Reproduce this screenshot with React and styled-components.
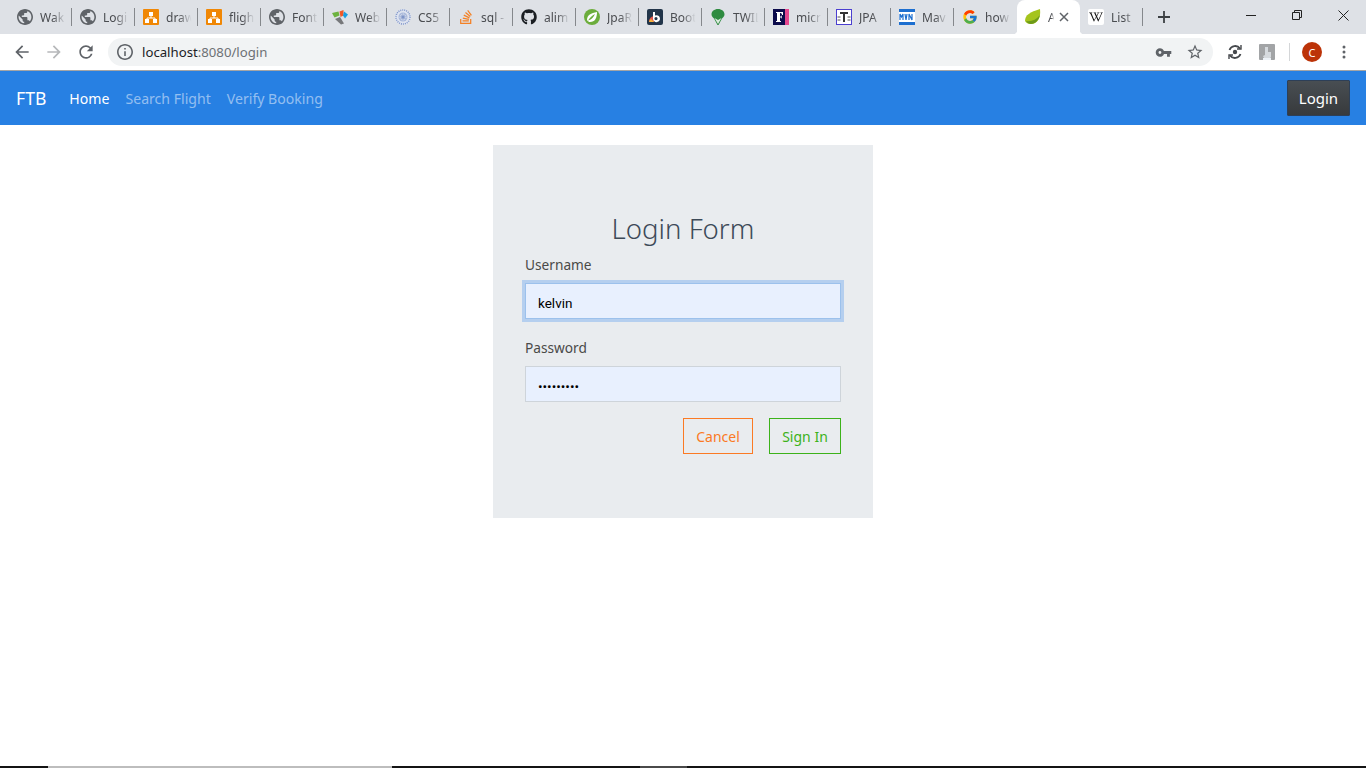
import React from 'react';
import styled, { createGlobalStyle, css } from 'styled-components';
import { FaGithub, FaStackOverflow, FaWikipediaW } from 'react-icons/fa';
import { FcGoogle } from 'react-icons/fc';

const GlobalStyle = createGlobalStyle`
  html, body {
    margin: 0;
    padding: 0;
    background: #fff;
    font-family: "Noto Sans", "Open Sans", "Liberation Sans", sans-serif;
  }
  * { box-sizing: border-box; }
`;

const Page = styled.div`
  min-height: 100vh;
  display: flex;
  flex-direction: column;
`;

// browser chrome
const TabStrip = styled.div`
  height: 34px;
  background: #dee1e6;
  display: flex;
  padding-left: 9px;
`;

const activeTab = css`
  background: #fff;
  border-radius: 8px 8px 0 0;

  &::before,
  &::after {
    content: '';
    position: absolute;
    bottom: 0;
    width: 4px;
    height: 4px;
  }
  &::before {
    left: -4px;
    background: radial-gradient(circle at 0 0, transparent 4px, #fff 4.5px);
  }
  &::after {
    right: -4px;
    background: radial-gradient(circle at 100% 0, transparent 4px, #fff 4.5px);
  }
`;

const separatorTab = css`
  &::after {
    content: '';
    position: absolute;
    right: 0;
    top: 8px;
    width: 1px;
    height: 18px;
    background: #85888c;
  }
`;

const Tab = styled.div`
  position: relative;
  width: 63px;
  height: 34px;
  flex: none;
  display: flex;
  align-items: center;
  padding-left: 8px;
  gap: 7px;
  ${(p) => p.$active && activeTab}
  ${(p) => p.$sep && separatorTab}
`;

const TabIcon = styled.span`
  width: 16px;
  height: 16px;
  flex: none;
  display: flex;
  align-items: center;
  justify-content: center;

  svg {
    flex: none;
  }
`;

const WikiTile = styled.span`
  width: 16px;
  height: 16px;
  border-radius: 2px;
  background: #fff;
  display: flex;
  align-items: center;
  justify-content: center;
`;

const TabTitle = styled.span`
  flex: 1;
  min-width: 0;
  overflow: hidden;
  white-space: nowrap;
  font-size: 12px;
  color: #4a4c50;
  -webkit-mask-image: linear-gradient(90deg, #000 40%, transparent 80%);
  mask-image: linear-gradient(90deg, #000 40%, transparent 80%);
`;

const TabClose = styled.span`
  width: 16px;
  height: 16px;
  margin: 0 8px 0 -7px;
  flex: none;
  display: flex;
  align-items: center;
  justify-content: center;
`;

const NewTab = styled.div`
  width: 30px;
  height: 34px;
  margin-left: 6px;
  display: flex;
  align-items: center;
  justify-content: center;
`;

const WindowControls = styled.div`
  margin-left: auto;
  display: flex;
`;

const WindowButton = styled.div`
  width: 46px;
  height: 30px;
  display: flex;
  align-items: center;
  justify-content: center;
`;

const Toolbar = styled.div`
  height: 37px;
  background: #fff;
  border-bottom: 1px solid #a5a5a5;
  display: flex;
  align-items: center;
  padding: 0 6px;
`;

const ToolButton = styled.div`
  width: 32px;
  height: 32px;
  flex: none;
  display: flex;
  align-items: center;
  justify-content: center;
`;

const Omnibox = styled.div`
  flex: 1;
  height: 28px;
  margin: 0 6px;
  padding: 0 2px 0 9px;
  border-radius: 14px;
  background: #f1f3f4;
  display: flex;
  align-items: center;
  gap: 9px;
`;

const Url = styled.div`
  flex: 1;
  font-size: 13.2px;
  color: #202124;

  span {
    color: #6d7175;
  }
`;

const OmniActions = styled.div`
  display: flex;
`;

const ToolDivider = styled.div`
  width: 13px;
  height: 18px;
  flex: none;
  padding-left: 6px;

  &::before {
    content: '';
    display: block;
    width: 1px;
    height: 100%;
    background: #d4d6d8;
  }
`;

const Avatar = styled.div`
  width: 20px;
  height: 20px;
  border-radius: 50%;
  background: #bc3308;
  color: #fff;
  font-size: 11px;
  display: flex;
  align-items: center;
  justify-content: center;
`;

// site navbar
const Navbar = styled.nav`
  height: 54px;
  background: #2780e3;
  display: flex;
  align-items: center;
  padding: 0 16px;
`;

const Brand = styled.div`
  font-size: 17.6px;
  color: #fff;
  margin-right: 23px;
`;

const NavLinks = styled.div`
  display: flex;
  gap: 16px;
`;

const NavLink = styled.a`
  font-size: 14.1px;
  color: ${(p) => (p.$active ? '#fff' : 'rgba(255, 255, 255, 0.5)')};
`;

const LoginButton = styled.button`
  margin-left: auto;
  width: 63px;
  height: 36px;
  padding: 0;
  font-family: inherit;
  font-size: 15px;
  color: #fff;
  background: linear-gradient(#484e53, #373a3c);
  border: 1px solid #2d3f57;
  border-radius: 1px;
`;

// login card
const Main = styled.main`
  flex: 1;
  display: flex;
  flex-direction: column;
  align-items: center;
  padding-top: 20px;
`;

const Card = styled.form`
  width: 380px;
  padding: 64px 32px;
  background: #e9ecef;
`;

const Title = styled.h1`
  margin: 0;
  height: 44px;
  font-size: 27.6px;
  line-height: 38px;
  font-weight: 300;
  text-align: center;
  color: #3d4a58;
`;

const Field = styled.div`
  margin-bottom: ${(p) => p.$gap}px;
`;

const Label = styled.label`
  display: block;
  height: 24px;
  margin-bottom: 6px;
  font-size: 13.7px;
  line-height: 24px;
  color: #4a4a48;
`;

const Input = styled.input`
  display: block;
  width: 100%;
  height: 36px;
  padding: 3px 12px 0;
  font-family: "Roboto", "Liberation Sans", sans-serif;
  font-size: 13.5px;
  color: #000;
  background: #e8f0fe;
  border: 1px solid ${(p) => (p.$focused ? '#9cc1ec' : '#ced4da')};
  box-shadow: ${(p) => (p.$focused ? '0 0 0 3px #b5cfef' : 'none')};
  outline: none;
  border-radius: 0;
`;

const Actions = styled.div`
  display: flex;
  justify-content: flex-end;
  gap: 16px;
`;

const OutlineButton = styled.button`
  width: ${(p) => p.$width}px;
  height: 36px;
  padding: 0;
  font-family: inherit;
  font-size: 14px;
  color: ${(p) => p.$color};
  background: transparent;
  border: 1px solid ${(p) => p.$color};
  border-radius: 0;
`;

const BottomEdge = styled.div`
  height: 2px;
  display: flex;
  background: #141414;
`;

const EdgeSegment = styled.div`
  width: ${(p) => p.$width}px;
  background: ${(p) => p.$color};
`;

const Globe = () => (
  <svg width="16" height="16" viewBox="2 2 20 20" fill="#5f6368">
    <path d="M12 2C6.48 2 2 6.48 2 12s4.48 10 10 10 10-4.48 10-10S17.52 2 12 2zm-1 17.93c-3.95-.49-7-3.85-7-7.93 0-.62.08-1.21.21-1.79L9 15v1c0 1.1.9 2 2 2v1.93zm6.9-2.54c-.26-.81-1-1.39-1.9-1.39h-1v-3c0-.55-.45-1-1-1H8v-2h2c.55 0 1-.45 1-1V7h2c1.1 0 2-.9 2-2v-.41c2.93 1.19 5 4.06 5 7.41 0 2.08-.8 3.97-2.1 5.39z" />
  </svg>
);

const DrawIo = () => (
  <svg width="16" height="16" viewBox="0 0 16 16">
    <rect width="16" height="16" rx="1" fill="#f08705" />
    <path d="M8 6v3M8 9H4v2M8 9h4v2" stroke="#fff" strokeWidth="1" fill="none" />
    <rect x="6" y="3" width="4" height="4" fill="#fff" />
    <rect x="2" y="10" width="4" height="4" fill="#fff" />
    <rect x="10" y="10" width="4" height="4" fill="#fff" />
  </svg>
);

const Pinwheel = () => (
  <svg width="16" height="16" viewBox="0 0 16 16">
    <path d="M0 4l6.500-1.500 1 4-5 2z" fill="#6db33f" />
    <path d="M7.500 2.500l4-1.500 0 5.500-3 1.500z" fill="#f15a29" />
    <path d="M12 2.500l4 3-3 4-2-3z" fill="#1ba1e2" />
    <path d="M3 10l5-2 4 6.500-3 1z" fill="#77787b" />
  </svg>
);

const Seal = () => (
  <svg width="16" height="16" viewBox="0 0 16 16">
    <circle cx="8" cy="8" r="8" fill="#dfe4f0" />
    <circle cx="8" cy="8" r="7" fill="none" stroke="#7f95c8" strokeWidth="1.500" strokeDasharray="1 1" />
    <circle cx="8" cy="8" r="4.500" fill="#a9b8da" />
    <circle cx="8" cy="8" r="3" fill="none" stroke="#e6ebf5" strokeWidth="1" strokeDasharray="1 1" />
    <circle cx="8" cy="8" r="1.500" fill="#7f95c8" />
  </svg>
);

const Leaf = ({ round }) =>
  round ? (
    <svg width="16" height="16" viewBox="0 0 16 16">
      <circle cx="8" cy="8" r="8" fill="#6cad3c" />
      <path d="M3 11c0-5 4-7 10-8 0 6-2 10-7 10-1 0-2-.4-3-2z" fill="#fff" />
      <path d="M4 11.500c2-3 4-5 7-6.500-1.500 3-3 5.500-7 6.500z" fill="#6cad3c" />
    </svg>
  ) : (
    <svg width="18" height="16" viewBox="0 0 18 16">
      <path d="M1 12C1 6 6 3 16 0c1 8-2 15-9 15-3 0-5-1-6-3z" fill="#a5c41d" />
      <path d="M2 12c5 1 10-1 14-6-1 5-5 9-9 9-2 0-4-1-5-3z" fill="#6d9a1a" />
    </svg>
  );

const BootIcon = () => (
  <svg width="16" height="16" viewBox="0 0 16 16">
    <rect width="16" height="16" rx="2" fill="#22354a" />
    <path d="M2 13a6 6 0 0 1 5-6v6z" fill="#e2574c" />
    <path d="M2 13a4 4 0 0 1 2-3l3 3z" fill="#f3b33d" />
    <path d="M6 3h2v3.500a3.500 3.500 0 1 1-2 3.200zM9 8a1.600 1.600 0 1 0 0 3.200A1.600 1.600 0 0 0 9 8z" fill="#fff" fillRule="evenodd" />
  </svg>
);

const Balloon = () => (
  <svg width="16" height="16" viewBox="0 0 16 16">
    <path d="M8 0c3.800 0 6.500 2.300 6.500 5.200 0 1.800-1 3-2.500 4.300L8.500 16h-1L4 9.500C2.500 8.200 1.500 7 1.500 5.200 1.500 2.300 4.200 0 8 0z" fill="#2e8b40" />
    <path d="M4.500 9L8 15l3.500-6L8 11z" fill="#dbeadd" />
  </svg>
);

const FinTimes = () => (
  <svg width="16" height="16" viewBox="0 0 16 16">
    <rect width="16" height="16" fill="#0b0b4b" />
    <rect x="12" width="4" height="16" fill="#e5478f" />
    <path d="M3 3h7v3H9c0-1-.5-2-1.500-2H7v3.500h1.500V6.500H9v3h-.5V8.500H7V12h1v1H3v-1h1V4H3z" fill="#fff" />
  </svg>
);

const TypeBox = () => (
  <svg width="16" height="16" viewBox="0 0 16 16">
    <rect x="0.500" y="0.500" width="15" height="15" fill="#fff" stroke="#4b3fd0" />
    <path d="M4 3h8v2H9v8H7V5H4z" fill="#333" />
    <path d="M1.500 8h3M1.500 11h3M11.500 8h3M11.500 11h3" stroke="#555" strokeWidth="1" />
  </svg>
);

const Mvn = () => (
  <svg width="16" height="16" viewBox="0 0 16 16">
    <rect width="16" height="16" fill="#fff" />
    <rect width="16" height="3" fill="#1d6fd0" />
    <rect y="13" width="16" height="3" fill="#1d6fd0" />
    <path d="M1 11V5l1.500 3L4 5v6M6 5l1 6 1-6M10 11V5l3 6V5" stroke="#1d6fd0" strokeWidth="1.200" fill="none" />
  </svg>
);

const tabs = [
  { id: 1, title: 'Wak', icon: <Globe /> },
  { id: 2, title: 'Logi', icon: <Globe /> },
  { id: 3, title: 'draw', icon: <DrawIo /> },
  { id: 4, title: 'fligh', icon: <DrawIo /> },
  { id: 5, title: 'Font', icon: <Globe /> },
  { id: 6, title: 'Web', icon: <Pinwheel /> },
  { id: 7, title: 'CS5', icon: <Seal /> },
  { id: 8, title: 'sql -', icon: <FaStackOverflow size={16} color="#f48024" /> },
  { id: 9, title: 'alim', icon: <FaGithub size={16} color="#1b1f23" /> },
  { id: 10, title: 'JpaR', icon: <Leaf round /> },
  { id: 11, title: 'Boot', icon: <BootIcon /> },
  { id: 12, title: 'TWIL', icon: <Balloon /> },
  { id: 13, title: 'micr', icon: <FinTimes /> },
  { id: 14, title: 'JPA', icon: <TypeBox /> },
  { id: 15, title: 'Mav', icon: <Mvn /> },
  { id: 16, title: 'how', icon: <FcGoogle size={16} />, noSep: true },
  { id: 17, title: 'A', icon: <Leaf />, active: true },
  { id: 18, title: 'List', icon: <WikiTile><FaWikipediaW size={14} color="#111" /></WikiTile> },
];

const Chrome = () => (
  <>
    <TabStrip>
      {tabs.map((t) => (
        <Tab key={t.id} $active={t.active} $sep={!t.active && !t.noSep}>
          <TabIcon>{t.icon}</TabIcon>
          <TabTitle>{t.title}</TabTitle>
          {t.active && (
            <TabClose>
              <svg width="10" height="10" viewBox="0 0 10 10" stroke="#5f6368" strokeWidth="1.500">
                <path d="M1 1l8 8M9 1l-8 8" />
              </svg>
            </TabClose>
          )}
        </Tab>
      ))}
      <NewTab>
        <svg width="12" height="12" viewBox="0 0 12 12" stroke="#3c4043" strokeWidth="1.800">
          <path d="M6 0v12M0 6h12" />
        </svg>
      </NewTab>
      <WindowControls>
        <WindowButton>
          <svg width="10" height="10" viewBox="0 0 10 10" stroke="#222" fill="none">
            <path d="M0 5.500h10" />
          </svg>
        </WindowButton>
        <WindowButton>
          <svg width="10" height="10" viewBox="0 0 10 10" stroke="#222" fill="none">
            <path d="M0.500 2.500h7v7h-7zM2.500 2.500v-2h7v7h-2" />
          </svg>
        </WindowButton>
        <WindowButton>
          <svg width="11" height="11" viewBox="0 0 11 11" stroke="#222" fill="none">
            <path d="M0.500 0.500l10 10M10.500 0.500l-10 10" />
          </svg>
        </WindowButton>
      </WindowControls>
    </TabStrip>
    <Toolbar>
      <ToolButton>
        <svg width="20" height="20" viewBox="0 0 24 24" fill="#5f6368">
          <path d="M20 11H7.830l5.590-5.590L12 4l-8 8 8 8 1.410-1.410L7.830 13H20v-2z" />
        </svg>
      </ToolButton>
      <ToolButton>
        <svg width="20" height="20" viewBox="0 0 24 24" fill="#b6b8ba">
          <path d="M12 4l-1.410 1.410L16.170 11H4v2h12.170l-5.580 5.590L12 20l8-8z" />
        </svg>
      </ToolButton>
      <ToolButton>
        <svg width="20" height="20" viewBox="0 0 24 24" fill="#5f6368">
          <path d="M17.650 6.350A7.958 7.958 0 0 0 12 4c-4.420 0-7.990 3.580-7.990 8s3.570 8 7.990 8c3.730 0 6.840-2.550 7.730-6h-2.080A5.990 5.990 0 0 1 12 18c-3.310 0-6-2.690-6-6s2.690-6 6-6c1.660 0 3.140.690 4.220 1.780L13 11h7V4l-2.350 2.350z" />
        </svg>
      </ToolButton>
      <Omnibox>
        <svg width="16" height="16" viewBox="2 2 20 20" fill="#5f6368">
          <path d="M11 7h2v2h-2zm0 4h2v6h-2zm1-9C6.480 2 2 6.480 2 12s4.480 10 10 10 10-4.480 10-10S17.520 2 12 2zm0 18c-4.410 0-8-3.590-8-8s3.590-8 8-8 8 3.590 8 8-3.590 8-8 8z" />
        </svg>
        <Url>
          localhost<span>:8080/login</span>
        </Url>
        <OmniActions>
          <ToolButton>
            <svg width="17" height="17" viewBox="0 0 24 24" fill="#5f6368">
              <path d="M12.650 10C11.830 7.670 9.610 6 7 6c-3.310 0-6 2.690-6 6s2.690 6 6 6c2.610 0 4.830-1.670 5.650-4H17v4h4v-4h2v-4H12.650zM7 14c-1.100 0-2-.9-2-2s.9-2 2-2 2 .9 2 2-.9 2-2 2z" />
            </svg>
          </ToolButton>
          <ToolButton>
            <svg width="18" height="18" viewBox="0 0 24 24" fill="#5f6368">
              <path d="M22 9.240l-7.190-.62L12 2 9.190 8.630 2 9.240l5.460 4.730L5.820 21 12 17.270 18.180 21l-1.630-7.030L22 9.240zM12 15.400l-3.760 2.270 1-4.280-3.320-2.880 4.380-.38L12 6.100l1.710 4.040 4.380.38-3.320 2.880 1 4.280L12 15.400z" />
            </svg>
          </ToolButton>
        </OmniActions>
      </Omnibox>
      <ToolButton>
        <svg width="16" height="16" viewBox="0 0 16 16" fill="none" stroke="#45484c" strokeWidth="1.800">
          <path d="M2.500 6A6 6 0 0 1 13 4.500M13.500 10A6 6 0 0 1 3 11.500" />
          <path d="M14 1v4h-4M2 15v-4h4" strokeWidth="1.400" />
          <circle cx="8" cy="8" r="2.200" fill="#45484c" stroke="none" />
        </svg>
      </ToolButton>
      <ToolButton>
        <svg width="16" height="16" viewBox="0 0 16 16">
          <rect width="16" height="16" rx="1" fill="#a2a4a6" />
          <path d="M6 3h3v5h3v5l-2 3H6l-2-4 2-1z" fill="#d6dade" />
          <path d="M4 14h8v2H4z" fill="#edf2f7" />
        </svg>
      </ToolButton>
      <ToolDivider />
      <ToolButton>
        <Avatar>C</Avatar>
      </ToolButton>
      <ToolButton>
        <svg width="4" height="14" viewBox="0 0 4 14" fill="#5f6368">
          <circle cx="2" cy="2" r="1.500" />
          <circle cx="2" cy="7" r="1.500" />
          <circle cx="2" cy="12" r="1.500" />
        </svg>
      </ToolButton>
    </Toolbar>
  </>
);

export default function App() {
  return (
    <Page>
      <GlobalStyle />
      <Chrome />
      <Navbar>
        <Brand>FTB</Brand>
        <NavLinks>
          <NavLink $active>Home</NavLink>
          <NavLink>Search Flight</NavLink>
          <NavLink>Verify Booking</NavLink>
        </NavLinks>
        <LoginButton type="button">Login</LoginButton>
      </Navbar>
      <Main>
        <Card>
          <Title>Login Form</Title>
          <Field $gap={17}>
            <Label>Username</Label>
            <Input $focused type="text" value="kelvin" readOnly />
          </Field>
          <Field $gap={16}>
            <Label>Password</Label>
            <Input type="password" value="kelvin123" readOnly />
          </Field>
          <Actions>
            <OutlineButton type="button" $width={70} $color="#fb7a24">Cancel</OutlineButton>
            <OutlineButton type="button" $width={72} $color="#3cb21a">Sign In</OutlineButton>
          </Actions>
        </Card>
      </Main>
      <BottomEdge>
        <EdgeSegment $width={48} $color="#141414" />
        <EdgeSegment $width={344} $color="#bdbdbd" />
        <EdgeSegment $width={248} $color="#141414" />
        <EdgeSegment $width={47} $color="#4a4a4a" />
      </BottomEdge>
    </Page>
  );
}
